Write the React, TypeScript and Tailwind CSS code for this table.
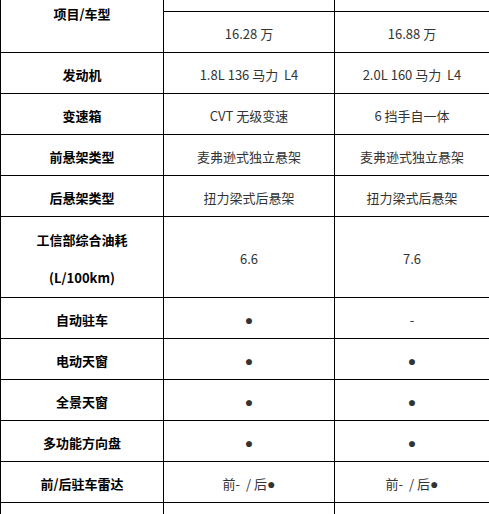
import React from "react";

function Dot() {
  return (
    <span className="text-[14px]" style={{ fontFamily: '"Liberation Sans", Arial, sans-serif' }}>
      ●
    </span>
  );
}

const rows: { label: React.ReactNode; a: React.ReactNode; b: React.ReactNode; tall?: boolean }[] = [
  { label: "发动机", a: "1.8L 136 马力\u00a0\u00a0L4", b: "2.0L 160 马力\u00a0\u00a0L4" },
  { label: "变速箱", a: "CVT 无级变速", b: "6 挡手自一体" },
  { label: "前悬架类型", a: "麦弗逊式独立悬架", b: "麦弗逊式独立悬架" },
  { label: "后悬架类型", a: "扭力梁式后悬架", b: "扭力梁式后悬架" },
  {
    label: (
      <div className="leading-[38px]">
        <div>工信部综合油耗</div>
        <div>(L/100km)</div>
      </div>
    ),
    a: "6.6",
    b: "7.6",
    tall: true,
  },
  { label: "自动驻车", a: <Dot />, b: "-" },
  { label: "电动天窗", a: <Dot />, b: <Dot /> },
  { label: "全景天窗", a: <Dot />, b: <Dot /> },
  { label: "多功能方向盘", a: <Dot />, b: <Dot /> },
  {
    label: "前/后驻车雷达",
    a: (
      <span>
        前-{"\u00a0\u00a0"}/ 后<Dot />
      </span>
    ),
    b: (
      <span>
        前-{"\u00a0\u00a0"}/ 后<Dot />
      </span>
    ),
  },
  { label: "", a: "", b: "" },
];

export default function App() {
  return (
    <div
      className="w-[489px] h-[514px] overflow-hidden bg-white"
      style={{ fontFamily: '"Noto Sans CJK SC", "Noto Sans", sans-serif' }}
    >
      <table className="mt-[-30px] w-[489px] table-fixed border-collapse text-[13px]">
        <colgroup>
          <col className="w-[163px]" />
          <col className="w-[171px]" />
          <col className="w-[155px]" />
        </colgroup>
        <tbody>
          <tr className="h-[41px]">
            <td rowSpan={2} className="border border-black pt-[4px] text-center font-bold text-black">
              项目/车型
            </td>
            <td className="border border-black pt-[4px] text-center text-[#333]">2017款 1.8L 舒适版</td>
            <td className="border border-black pt-[4px] text-center text-[#333]">2017款 2.0L 豪华版</td>
          </tr>
          <tr className="h-[41px]">
            <td className="border border-black pt-[4px] text-center text-[#333]">16.28 万</td>
            <td className="border border-black pt-[4px] text-center text-[#333]">16.88 万</td>
          </tr>
          {rows.map((r, i) => (
            <tr key={i} className={r.tall ? "h-[81px]" : "h-[41px]"}>
              <td className="border border-black pt-[4px] text-center font-bold text-black">{r.label}</td>
              <td className="border border-black pt-[4px] text-center text-[#333]">{r.a}</td>
              <td className="border border-black pt-[4px] text-center text-[#333]">{r.b}</td>
            </tr>
          ))}
        </tbody>
      </table>
    </div>
  );
}
